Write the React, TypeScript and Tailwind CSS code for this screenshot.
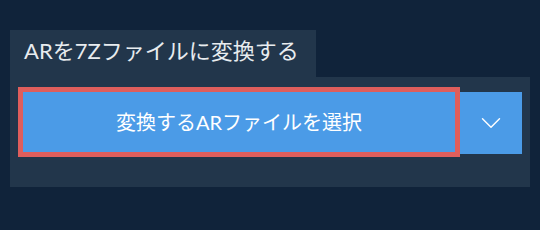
import { ChevronDown } from 'lucide-react'

export default function App() {
  return (
    <main
      className="w-[540px] h-[230px] bg-[#10233a] pt-[30px] pl-[10px]"
      style={{ fontFamily: 'Lato, "Noto Sans CJK JP", sans-serif' }}
    >
      <div className="w-[306px] h-[47px] bg-[#22364b] flex items-center pl-[14px]">
        <h1 className="text-[22px] leading-none text-[#e8ecef] pb-[5px]">ARを7Zファイルに変換する</h1>
      </div>
      <div className="w-[520px] h-[110px] bg-[#22364b] pt-[15px] pl-[13px] flex items-start">
        <button className="w-[432px] h-[60px] bg-[#4b9be7] outline-[5px] outline-solid outline-[#df5e5c] text-white text-[20px] flex items-center justify-center">
          変換するARファイルを選択
        </button>
        <button className="ml-[5px] w-[62px] h-[62px] bg-[#4b9be7] flex items-center justify-center text-white">
          <ChevronDown size={34} strokeWidth={1} />
        </button>
      </div>
    </main>
  )
}
